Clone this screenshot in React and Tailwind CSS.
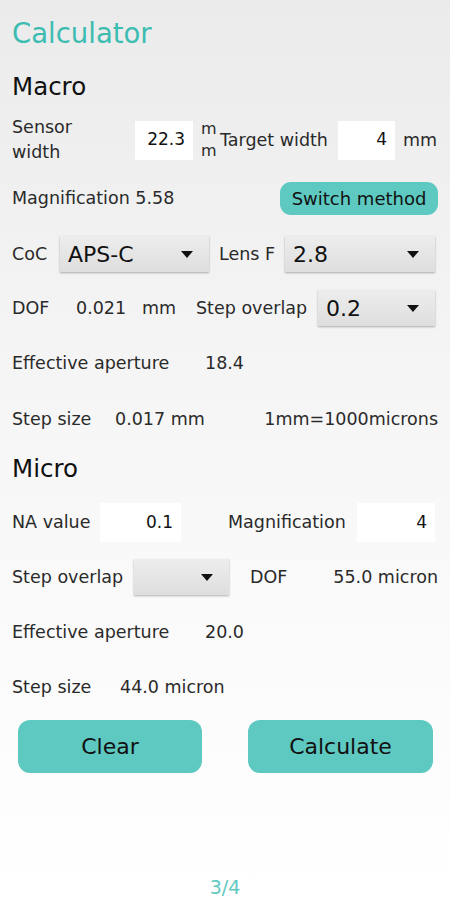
import React from 'react';

const font = { fontFamily: '"DejaVu Sans", "Noto Sans", sans-serif' };

const Caret = () => (
  <svg width="12" height="7" viewBox="0 0 12 7" className="shrink-0">
    <path d="M0 0 L12 0 L6 7 Z" fill="#111" />
  </svg>
);

const Dropdown = ({ value, className }) => (
  <div
    className={`flex items-center justify-between h-[36px] pl-2 pr-4 bg-gradient-to-b from-[#ededed] to-[#dedede] shadow-[0_1px_2px_rgba(0,0,0,0.3)] text-[22px] text-[#111] ${className}`}
  >
    <span>{value}</span>
    <Caret />
  </div>
);

const Field = ({ value, className }) => (
  <div className={`flex items-center justify-end h-[39px] bg-white pr-2 text-[17px] text-[#111] ${className}`}>
    {value}
  </div>
);

const App = () => {
  return (
    <div
      className="w-[450px] h-[900px] flex flex-col bg-gradient-to-b from-[#ebebeb] via-[#f7f7f7] to-white text-[17.5px] text-[#2a2a2a] overflow-hidden"
      style={font}
    >
      <div className="pl-[12px] pt-[13px] h-[69px] text-[27.5px] text-[#3dbcb1]">Calculator</div>

      <div className="pl-[12px] h-[42px] text-[24.5px] text-[#111] leading-[36px]">Macro</div>

      <div className="flex items-center h-[46px] mt-[6px] pl-[12px]">
        <div className="w-[123px] leading-[25px]">
          Sensor
          <br />
          width
        </div>
        <Field value="22.3" className="w-[58px]" />
        <div className="w-[27px] pl-[8px] text-[16px] leading-[22px]">
          m
          <br />m
        </div>
        <div className="w-[118px] whitespace-nowrap">Target width</div>
        <Field value="4" className="w-[57px]" />
        <div className="pl-[8px]">mm</div>
      </div>

      <div className="flex items-center justify-between h-[40px] mt-[15px] pl-[12px] pr-[12px]">
        <div>Magnification 5.58</div>
        <div className="flex items-center justify-center w-[158px] h-[33px] rounded-[11px] bg-[#5ec9c1] text-[18px] text-[#111]">
          Switch method
        </div>
      </div>

      <div className="flex items-center h-[36px] mt-[18px] pl-[12px]">
        <div className="w-[48px]">CoC</div>
        <Dropdown value="APS-C" className="w-[149px]" />
        <div className="w-[76px] pl-[10px]">Lens F</div>
        <Dropdown value="2.8" className="w-[150px]" />
      </div>

      <div className="flex items-center h-[36px] mt-[18px] pl-[12px]">
        <div className="w-[64px]">DOF</div>
        <div className="w-[66px]">0.021</div>
        <div className="w-[54px]">mm</div>
        <div className="w-[122px] whitespace-nowrap">Step overlap</div>
        <Dropdown value="0.2" className="w-[117px]" />
      </div>

      <div className="flex items-center h-[36px] mt-[19px] pl-[12px]">
        <div className="w-[193px]">Effective aperture</div>
        <div>18.4</div>
      </div>

      <div className="flex items-center h-[36px] mt-[20px] pl-[12px] pr-[12px]">
        <div className="w-[103px]">Step size</div>
        <div className="flex-1">0.017 mm</div>
        <div>1mm=1000microns</div>
      </div>

      <div className="pl-[12px] h-[40px] mt-[14px] text-[24.5px] text-[#111] leading-[36px]">Micro</div>

      <div className="flex items-center h-[39px] mt-[12px] pl-[12px]">
        <div className="w-[88px]">NA value</div>
        <Field value="0.1" className="w-[81px]" />
        <div className="w-[176px] pl-[47px]">Magnification</div>
        <Field value="4" className="w-[78px]" />
      </div>

      <div className="flex items-center h-[36px] mt-[17px] pl-[12px]">
        <div className="w-[122px] whitespace-nowrap">Step overlap</div>
        <Dropdown value="" className="w-[95px]" />
        <div className="w-[104px] pl-[21px]">DOF</div>
        <div className="flex-1 text-right pr-[12px]">55.0 micron</div>
      </div>

      <div className="flex items-center h-[36px] mt-[19px] pl-[12px]">
        <div className="w-[193px]">Effective aperture</div>
        <div>20.0</div>
      </div>

      <div className="flex items-center h-[36px] mt-[19px] pl-[12px]">
        <div className="w-[108px]">Step size</div>
        <div>44.0 micron</div>
      </div>

      <div className="flex items-center justify-between h-[53px] mt-[15px] pl-[18px] pr-[17px]">
        <div className="flex items-center justify-center w-[184px] h-full rounded-[12px] bg-[#5ec9c1] text-[22px] text-[#111]">
          Clear
        </div>
        <div className="flex items-center justify-center w-[185px] h-full rounded-[12px] bg-[#5ec9c1] text-[22px] text-[#111]">
          Calculate
        </div>
      </div>

      <div className="flex-1" />
      <div className="text-center text-[19px] text-[#5ec9c1] h-[27px]">3/4</div>
    </div>
  );
};

export default App;
